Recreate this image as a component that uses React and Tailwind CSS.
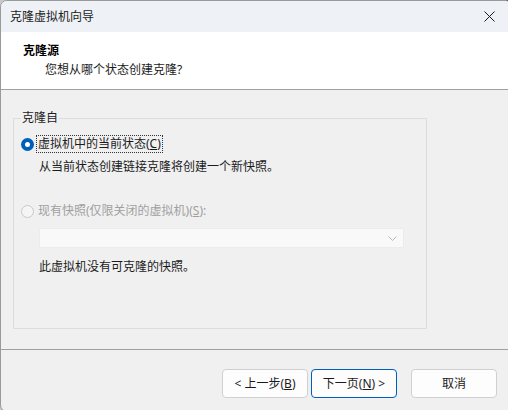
const font = {
  fontFamily: '"Noto Sans", "Noto Sans CJK SC", sans-serif',
};

function Radio({ checked, disabled }) {
  if (checked) {
    return (
      <span className="w-[13px] h-[13px] rounded-full bg-[#005fb8] flex items-center justify-center shrink-0">
        <span className="w-[5px] h-[5px] rounded-full bg-white" />
      </span>
    );
  }
  return (
    <span
      className={`w-[13px] h-[13px] rounded-full border shrink-0 ${
        disabled ? "border-[#c8c8c8] bg-[#f5f5f5]" : "border-[#8a8a8a] bg-white"
      }`}
    />
  );
}

function Button({ children, primary }) {
  return (
    <button
      className={`h-[29px] w-[86px] rounded-[4px] bg-[#fdfdfd] text-[12px] text-[#1b1b1b] flex items-center justify-center ${
        primary ? "border border-[#005fb8]" : "border border-[#d0d0d0]"
      }`}
    >
      {children}
    </button>
  );
}

export default function App() {
  return (
    <div
      className="w-[508px] h-[410px] bg-[linear-gradient(to_right,#c9c9c9_245px,#303030_245px)] overflow-hidden"
      style={font}
    >
      <div className="w-[512px] h-[412px] rounded-[7px] border border-[#9a9a9a] bg-[#f0f0f0] flex flex-col overflow-hidden">
        {/* Title bar */}
        <div className="h-[31px] bg-[#eef2f6] flex items-center justify-between pl-[9px] pr-[16px] shrink-0">
          <span className="text-[12px] text-[#1b1b1b]">克隆虚拟机向导</span>
          <svg width="11" height="11" viewBox="0 0 11 11">
            <path d="M0.5 0.5 L10.5 10.5 M10.5 0.5 L0.5 10.5" stroke="#1b1b1b" strokeWidth="1" />
          </svg>
        </div>

        {/* Header */}
        <div className="h-[58px] bg-white border-b border-[#a0a0a0] pl-[22px] pt-[11px] shrink-0">
          <div className="text-[12px] font-bold text-black leading-[16px]">克隆源</div>
          <div className="text-[12px] text-[#1b1b1b] leading-[16px] mt-[3px] pl-[22px]">
            您想从哪个状态创建克隆?
          </div>
        </div>

        {/* Body */}
        <div className="flex-1 pl-[12px] pt-[20px]">
          <fieldset className="w-[414px] h-[219px] border border-[#dcdcdc] rounded-[1px] pl-[7px] m-0">
            <legend className="text-[12px] text-[#1b1b1b] leading-[16px] px-[1px]">克隆自</legend>
            <div className="flex items-center gap-[3px] mt-[10px]">
              <Radio checked />
              <span className="text-[12px] text-[#1b1b1b] leading-[16px] outline outline-1 outline-dotted outline-[#333] px-[1px]">
                虚拟机中的当前状态(<span className="underline">C</span>)
              </span>
            </div>
            <div className="text-[12px] text-[#1b1b1b] leading-[16px] pl-[18px] mt-[7px]">
              从当前状态创建链接克隆将创建一个新快照。
            </div>
            <div className="flex items-center gap-[3px] mt-[28px]">
              <Radio disabled />
              <span className="text-[12px] text-[#a0a0a0] leading-[16px] px-[1px]">
                现有快照(仅限关闭的虚拟机)(<span className="underline">S</span>):
              </span>
            </div>
            <div className="ml-[18px] mt-[9px] w-[365px] h-[20px] bg-[#f9f9f9] border border-[#ececec] flex items-center justify-end pr-[6px]">
              <svg width="9" height="5" viewBox="0 0 9 5">
                <path d="M0.5 0.5 L4.5 4.5 L8.5 0.5" fill="none" stroke="#b8b8b8" strokeWidth="1" />
              </svg>
            </div>
            <div className="text-[12px] text-[#1b1b1b] leading-[16px] pl-[18px] mt-[11px]">
              此虚拟机没有可克隆的快照。
            </div>
          </fieldset>
        </div>

        {/* Footer */}
        <div className="h-[62px] border-t border-[#a0a0a0] shrink-0 flex items-start pt-[19px] pl-[221px]">
          <div className="flex gap-[3px]">
            <Button>&lt; 上一步(<span className="underline">B</span>)</Button>
            <Button primary>下一页(<span className="underline">N</span>) &gt;</Button>
          </div>
          <div className="ml-[14px]">
            <Button>取消</Button>
          </div>
        </div>
      </div>
    </div>
  );
}
